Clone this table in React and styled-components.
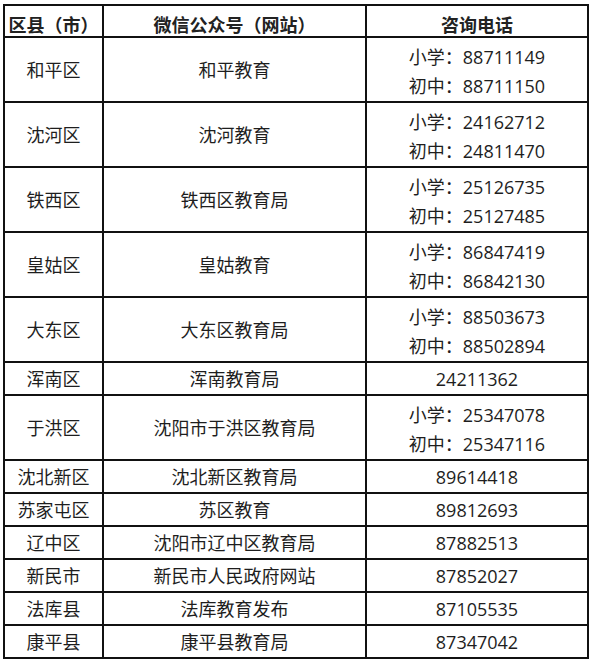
import React from "react";
import styled, { createGlobalStyle } from "styled-components";

const GlobalStyle = createGlobalStyle`
  html, body {
    margin: 0;
    padding: 0;
    background: #ffffff;
  }
  body {
    font-family: "Open Sans", "Noto Sans CJK SC", sans-serif;
    color: #1e1e1e;
  }
`;

const rows = [
  { area: "和平区", account: "和平教育", phones: ["小学：88711149", "初中：88711150"] },
  { area: "沈河区", account: "沈河教育", phones: ["小学：24162712", "初中：24811470"] },
  { area: "铁西区", account: "铁西区教育局", phones: ["小学：25126735", "初中：25127485"] },
  { area: "皇姑区", account: "皇姑教育", phones: ["小学：86847419", "初中：86842130"] },
  { area: "大东区", account: "大东区教育局", phones: ["小学：88503673", "初中：88502894"] },
  { area: "浑南区", account: "浑南教育局", phones: ["24211362"] },
  { area: "于洪区", account: "沈阳市于洪区教育局", phones: ["小学：25347078", "初中：25347116"] },
  { area: "沈北新区", account: "沈北新区教育局", phones: ["89614418"] },
  { area: "苏家屯区", account: "苏区教育", phones: ["89812693"] },
  { area: "辽中区", account: "沈阳市辽中区教育局", phones: ["87882513"] },
  { area: "新民市", account: "新民市人民政府网站", phones: ["87852027"] },
  { area: "法库县", account: "法库教育发布", phones: ["87105535"] },
  { area: "康平县", account: "康平县教育局", phones: ["87347042"] },
];

//layout
const Page = styled.div`
  padding: 4px 0 0 3px;
`;

const Table = styled.table`
  border-collapse: collapse;
  table-layout: fixed;
  width: 584px;
  font-size: 18px;
`;

const Row = styled.tr`
  height: ${(p) => (p.$double ? "65px" : "32.4px")};
`;

//cells
const HeadCell = styled.th`
  border: 2px solid #111;
  padding: 5px 0 0;
  font-family: "Noto Sans CJK SC", sans-serif;
  font-weight: 700;
  font-size: 18px;
  color: #222;
  text-align: center;
  vertical-align: middle;
  line-height: 24px;
`;

const Cell = styled.td`
  border: 2px solid #111;
  padding: ${(p) => (p.$shift ? "4px 0 0" : "2px 0 0")};
  text-align: center;
  vertical-align: middle;
  line-height: 27px;
  white-space: nowrap;
`;

const PhoneLine = styled.div`
  line-height: 29px;
`;

export default function App() {
  return (
    <Page>
      <GlobalStyle />
      <Table>
        <colgroup>
          <col style={{ width: 99 }} />
          <col style={{ width: 263 }} />
          <col style={{ width: 222 }} />
        </colgroup>
        <thead>
          <Row>
            <HeadCell>区县（市）</HeadCell>
            <HeadCell>微信公众号（网站）</HeadCell>
            <HeadCell>咨询电话</HeadCell>
          </Row>
        </thead>
        <tbody>
          {rows.map((r) => {
            const double = r.phones.length > 1;
            return (
              <Row key={r.area} $double={double}>
                <Cell>{r.area}</Cell>
                <Cell>{r.account}</Cell>
                <Cell $shift={double}>
                  {r.phones.map((p) => (
                    <PhoneLine key={p}>{p}</PhoneLine>
                  ))}
                </Cell>
              </Row>
            );
          })}
        </tbody>
      </Table>
    </Page>
  );
}
